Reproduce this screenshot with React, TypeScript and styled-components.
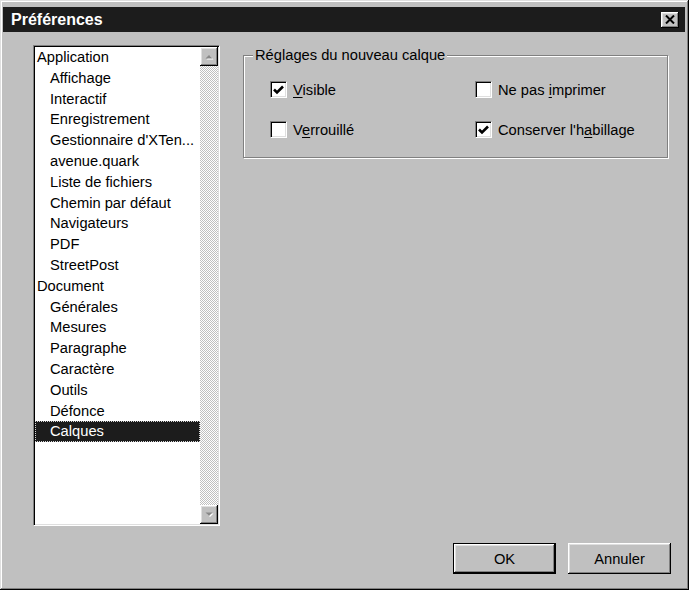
import React from "react";
import styled, { createGlobalStyle } from "styled-components";

const GlobalStyle = createGlobalStyle`
  html, body {
    margin: 0;
    padding: 0;
    background: #c0c0c0;
  }
  body {
    font-family: "Liberation Sans", Arial, sans-serif;
  }
`;

const raised = `
  box-shadow: inset -1px -1px #000, inset 1px 1px #fff, inset -2px -2px #808080,
    inset 2px 2px #dfdfdf;
`;

const Window = styled.div`
  box-sizing: border-box;
  width: 689px;
  height: 590px;
  padding: 7px 4px 3px 3px;
  background: #c0c0c0;
  box-shadow: inset -1px -1px #000, inset 1px 1px #dfdfdf, inset -2px -2px #808080,
    inset 2px 2px #fff;
  display: flex;
  flex-direction: column;
  font-family: "Liberation Sans", Arial, sans-serif;
  font-size: 14.7px;
  color: #000;
`;

const TitleBar = styled.div`
  flex: none;
  height: 25px;
  display: flex;
  align-items: center;
  justify-content: space-between;
  padding: 0 6px 0 8px;
  background: #1c1c1c;
  color: #fff;
  font-weight: bold;
  font-size: 16px;
`;

const CloseButton = styled.div`
  box-sizing: border-box;
  width: 18px;
  height: 16px;
  display: flex;
  align-items: center;
  justify-content: center;
  background: #c0c0c0;
  ${raised}
`;

const Body = styled.div`
  flex: 1;
  min-height: 0;
  display: grid;
  grid-template-columns: 187px 1fr;
  column-gap: 23px;
  padding: 13px 14px 13px 30px;
`;

const ListBox = styled.div`
  box-sizing: border-box;
  height: 481px;
  display: flex;
  padding: 1px;
  background: #fff;
  border: 1px solid;
  border-color: #808080 #fff #fff #808080;
  box-shadow: inset 1px 1px #000, inset -1px -1px #dfdfdf;
`;

const Items = styled.div`
  flex: 1;
  display: flex;
  flex-direction: column;
`;

const Item = styled.div<{ $level: number; $selected?: boolean }>`
  height: 20.8px;
  line-height: 20.8px;
  padding-left: ${(p) => (p.$level ? 15 : 2)}px;
  white-space: nowrap;
  background: ${(p) => (p.$selected ? "#1c1c1c" : "transparent")};
  color: ${(p) => (p.$selected ? "#fff" : "#000")};
  outline: ${(p) => (p.$selected ? "1px dotted #d8d8d8" : "none")};
  outline-offset: -1px;
`;

const ScrollBar = styled.div`
  width: 18px;
  display: flex;
  flex-direction: column;
  justify-content: space-between;
  background-color: #fff;
  background-image: conic-gradient(#c0c0c0 25%, #fff 0 50%, #c0c0c0 0 75%, #fff 0);
  background-size: 2px 2px;
`;

const ScrollButton = styled.div`
  box-sizing: border-box;
  height: 19px;
  display: flex;
  align-items: center;
  justify-content: center;
  background: #c0c0c0;
  ${raised}
`;

const RightColumn = styled.div`
  display: flex;
  flex-direction: column;
  padding-top: 2px;
`;

const GroupBox = styled.fieldset`
  margin: 0 3px 0 0;
  padding: 0;
  min-width: 0;
  border: 1px solid #808080;
  box-shadow: inset 1px 1px #fff, 1px 1px #fff;
`;

const Legend = styled.legend`
  margin-left: 9px;
  padding: 0 2px;
  line-height: 16px;
  background: #c0c0c0;
`;

const Options = styled.div`
  display: grid;
  grid-template-columns: 205px auto;
  row-gap: 23px;
  padding: 18px 0 19px 26px;
`;

const Option = styled.label`
  display: flex;
  align-items: center;
  gap: 6px;
  height: 17px;
  white-space: nowrap;
`;

const Box = styled.span`
  box-sizing: border-box;
  width: 17px;
  height: 17px;
  display: flex;
  align-items: center;
  justify-content: center;
  background: #fff;
  border: 1px solid;
  border-color: #808080 #fff #fff #808080;
  box-shadow: inset 1px 1px #000, inset -1px -1px #dfdfdf;
`;

const Key = styled.span`
  text-decoration: underline;
  text-underline-offset: 2px;
`;

const ButtonRow = styled.div`
  margin-top: auto;
  display: flex;
  justify-content: flex-end;
  gap: 12px;
`;

const Button = styled.div<{ $default?: boolean }>`
  box-sizing: border-box;
  width: 103px;
  height: 31px;
  display: flex;
  align-items: center;
  justify-content: center;
  background: #c0c0c0;
  border: ${(p) => (p.$default ? "1px solid #000" : "none")};
  ${raised}
`;

const Arrow = ({ up }: { up?: boolean }) => (
  <svg width="9" height="6" viewBox="0 0 9 6">
    <polygon
      points={up ? "1.5,5.5 8.5,5.5 5,2" : "1.5,1.5 8.5,1.5 5,5"}
      fill="#fff"
    />
    <polygon points={up ? "0.5,4.5 7.5,4.5 4,1" : "0.5,0.5 7.5,0.5 4,4"} fill="#888" />
  </svg>
);

const Check = ({ on }: { on?: boolean }) => (
  <Box>
    {on && (
      <svg width="11" height="10" viewBox="0 0 11 10">
        <polyline points="1,4.5 4,7.5 10,1.5" fill="none" stroke="#000" strokeWidth="2.6" />
      </svg>
    )}
  </Box>
);

const items: [string, number][] = [
  ["Application", 0],
  ["Affichage", 1],
  ["Interactif", 1],
  ["Enregistrement", 1],
  ["Gestionnaire d'XTen...", 1],
  ["avenue.quark", 1],
  ["Liste de fichiers", 1],
  ["Chemin par défaut", 1],
  ["Navigateurs", 1],
  ["PDF", 1],
  ["StreetPost", 1],
  ["Document", 0],
  ["Générales", 1],
  ["Mesures", 1],
  ["Paragraphe", 1],
  ["Caractère", 1],
  ["Outils", 1],
  ["Défonce", 1],
  ["Calques", 1],
];

export default function App() {
  return (
    <>
      <GlobalStyle />
      <Window>
        <TitleBar>
          <span>Préférences</span>
          <CloseButton>
            <svg width="10" height="9" viewBox="0 0 10 9">
              <path d="M1 0.5 L9 8.5 M9 0.5 L1 8.5" stroke="#000" strokeWidth="2" />
            </svg>
          </CloseButton>
        </TitleBar>
        <Body>
          <ListBox>
            <Items>
              {items.map(([name, level]) => (
                <Item key={name} $level={level} $selected={name === "Calques"}>
                  {name}
                </Item>
              ))}
            </Items>
            <ScrollBar>
              <ScrollButton>
                <Arrow up />
              </ScrollButton>
              <ScrollButton>
                <Arrow />
              </ScrollButton>
            </ScrollBar>
          </ListBox>
          <RightColumn>
            <GroupBox>
              <Legend>Réglages du nouveau calque</Legend>
              <Options>
                <Option>
                  <Check on />
                  <span>
                    <Key>V</Key>isible
                  </span>
                </Option>
                <Option>
                  <Check />
                  <span>
                    Ne pas <Key>i</Key>mprimer
                  </span>
                </Option>
                <Option>
                  <Check />
                  <span>
                    V<Key>e</Key>rrouillé
                  </span>
                </Option>
                <Option>
                  <Check on />
                  <span>
                    Conserver l'h<Key>a</Key>billage
                  </span>
                </Option>
              </Options>
            </GroupBox>
            <ButtonRow>
              <Button $default>OK</Button>
              <Button>Annuler</Button>
            </ButtonRow>
          </RightColumn>
        </Body>
      </Window>
    </>
  );
}
